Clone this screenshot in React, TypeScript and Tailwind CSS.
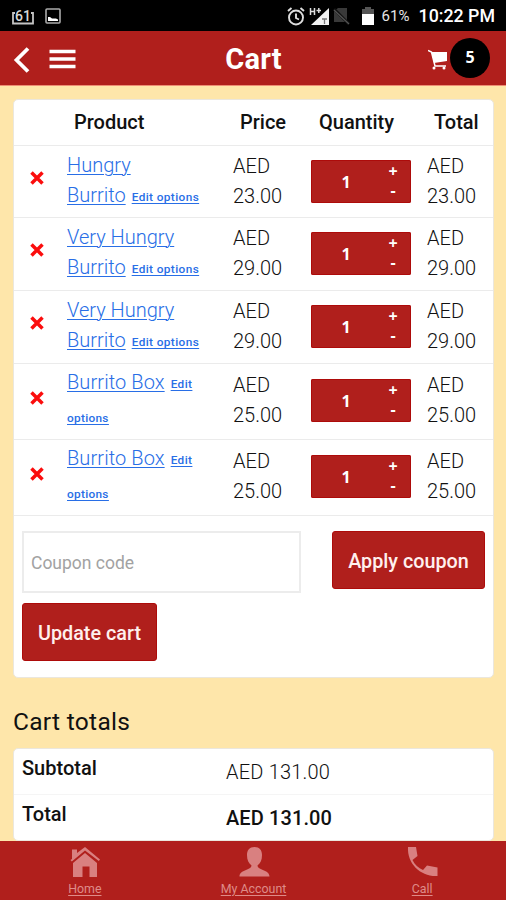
import type { ReactNode } from 'react';

type CartItem = {
  id: number;
  name: string[];
  options: string[];
  price: string;
  quantity: number;
  rowClass: string;
};

const CART_ITEMS: CartItem[] = [
  { id: 1, name: ['Hungry', 'Burrito'], options: ['Edit options'], price: '23.00', quantity: 1, rowClass: 'h-[72px]' },
  { id: 2, name: ['Very Hungry', 'Burrito'], options: ['Edit options'], price: '29.00', quantity: 1, rowClass: 'h-[73px]' },
  { id: 3, name: ['Very Hungry', 'Burrito'], options: ['Edit options'], price: '29.00', quantity: 1, rowClass: 'h-[73px]' },
  { id: 4, name: ['Burrito Box'], options: ['Edit', 'options'], price: '25.00', quantity: 1, rowClass: 'h-[76px]' },
  { id: 5, name: ['Burrito Box'], options: ['Edit', 'options'], price: '25.00', quantity: 1, rowClass: 'h-[76px]' }
];

const COLUMNS = 'grid grid-cols-[53px_166px_78px_116px_66px]';

const StatusBar = () => (
  <div className="flex h-[31px] shrink-0 items-center bg-black pl-3 pr-[10px] pt-px text-[#e6e6e6]">
    <svg viewBox="0 0 22 17" className="h-[17px] w-[22px]" fill="none" stroke="#c4c4c4">
      <path d="M3 5H1v10.500h20V5h-2" strokeWidth="1.8" />
      <text x="3" y="12.500" fill="#d8d8d8" stroke="none" fontFamily="Roboto" fontSize="14" fontWeight="500">
        61
      </text>
    </svg>
    <svg viewBox="0 0 16 16" className="ml-[11px] size-4" fill="none">
      <rect x="1" y="1" width="14" height="14" rx="1" stroke="#aaa" strokeWidth="1.6" />
      <path d="M3 13V9h2l2 1.500h4L13 11.500V13Z" fill="#fff" />
    </svg>
    <div className="ml-auto flex items-center">
      <svg viewBox="0 0 18 19" className="h-[19px] w-[18px]" fill="none" stroke="#dedede" strokeWidth="1.9">
        <circle cx="9" cy="10.500" r="7" />
        <path d="M9 6.500v4.500l3 1.500M1 4l3.500-3M17 4l-3.500-3" />
      </svg>
      <svg viewBox="0 0 21 19" className="ml-[4px] h-[19px] w-[21px]">
        <path d="M20 1v17H2Z" fill="#f2f2f2" />
        <path d="M1.500 1v7M5.500 1v7M1.500 4.500h4M7.500 3.500h4.500M9.800 1v5" stroke="#ddd" strokeWidth="1.5" />
        <path d="M13 12h5M15.500 12v5" stroke="#777" strokeWidth="1.3" />
      </svg>
      <svg viewBox="0 0 17 18" className="ml-[3px] h-[18px] w-[17px]">
        <path d="M1 4 5 1h9v14H1Z" fill="#393939" />
        <path d="m1 2 15 15" stroke="#111" strokeWidth="3" />
        <path d="m1 3 15 14" stroke="#555" strokeWidth="1.2" />
      </svg>
      <svg viewBox="0 0 14 19" className="ml-[11px] h-[19px] w-[14px]">
        <path d="M4 0h6v2h3v6H1V2h3Z" fill="#555" />
        <path d="M1 7h12v11H1Z" fill="#fff" />
      </svg>
      <span className="ml-[7px] w-[37px] whitespace-nowrap text-[15px]">61%</span>
      <span className="mr-px whitespace-nowrap text-[17.800px] font-medium text-white">10:22 PM</span>
    </div>
  </div>
);

const Header = () => (
  <header className="grid h-[54px] shrink-0 grid-cols-[1fr_auto_1fr] items-center bg-[#b01f1c] text-white">
    <div className="flex items-center pl-[13px] pt-1">
      <svg viewBox="0 0 17 26" className="h-[26px] w-[17px]" fill="none" stroke="white" strokeWidth="3.800">
        <path d="M15 1.500 3.500 13 15 24.500" />
      </svg>
      <svg viewBox="0 0 27 20" className="mb-[2px] ml-[19px] h-5 w-[27px]" stroke="white" strokeWidth="3.500">
        <path d="M.5 2.500h26M.5 10h26M.5 17.500h26" />
      </svg>
    </div>
    <h1 className="pl-px pt-1 text-[29px] font-bold tracking-[0.2px]">Cart</h1>
    <div className="flex items-center justify-end pr-4">
      <svg viewBox="0 0 20 21" className="mt-[2px] h-[21px] w-5" fill="none" stroke="white">
        <path d="M0 1.500 3.500 3 7 17h11" strokeWidth="1.500" />
        <path d="M3.500 3H19v9L6 14Z" fill="white" stroke="none" />
        <circle cx="6" cy="19" r="1.500" fill="white" stroke="none" />
        <circle cx="16" cy="19" r="1.500" fill="white" stroke="none" />
      </svg>
      <span className="ml-[2px] flex size-10 items-center justify-center rounded-full bg-black pb-[2px] font-['Open_Sans'] text-[16px] font-bold">
        5
      </span>
    </div>
  </header>
);

const QuantityInput = ({ value }: { value: number }) => (
  <div className="flex h-[43px] w-[100px] rounded-[2px] bg-[#b01f1c] font-['Open_Sans'] font-bold text-white ring-1 ring-inset ring-[#ad0b0a]">
    <span className="flex w-[70px] items-center justify-center text-[16px]">{value}</span>
    <div className="flex w-6 flex-col items-center text-[16px] leading-5">
      <button type="button" className="h-5 pt-px">+</button>
      <button type="button" className="h-5">-</button>
    </div>
  </div>
);

const CartRow = ({ item }: { item: CartItem }) => {
  const isLong = item.name.length > 1;
  return (
    <div className={`${COLUMNS} ${item.rowClass} border-t border-[#ebebeb] text-[20px] font-light leading-[30px]`}>
      <div className="flex items-center justify-center pr-[7px]">
        <svg viewBox="0 0 14 14" className="mt-[-8px] size-[14px]" stroke="#fb0d0d" strokeWidth="3.500">
          <path d="m1.500 1.500 11 11m0-11-11 11" />
        </svg>
      </div>
      <div className={`whitespace-nowrap text-[#286ee6] underline decoration-1 underline-offset-2 ${isLong ? 'pt-1' : 'pt-[3px]'}`}>
        {isLong && <div>{item.name[0]}</div>}
        <div className={isLong ? '' : 'pb-[3px] tracking-[0.1px]'}>
          <a>{item.name[item.name.length - 1]}</a>
          <a className="relative -top-px ml-[6px] inline-block text-[11.800px] font-medium tracking-[0.4px] underline">
            {item.options[0]}
          </a>
        </div>
        {item.options[1] && (
          <a className="block text-[11.800px] font-medium tracking-[0.3px] underline">{item.options[1]}</a>
        )}
      </div>
      <div className={isLong ? 'pt-[5px]' : 'pt-[6px]'}>
        AED<br />{item.price}
      </div>
      <div className={isLong ? 'pt-[14px]' : 'pt-[15px]'}>
        <QuantityInput value={item.quantity} />
      </div>
      <div className={isLong ? 'pt-[5px]' : 'pt-[6px]'}>
        AED<br />{item.price}
      </div>
    </div>
  );
};

const CartCard = () => (
  <section className="h-[579px] w-[481px] rounded-[5px] border border-[#ebe7dd] bg-white">
    <div className={`${COLUMNS} h-[45px] pt-[7px] text-[20px] font-medium leading-[30px]`}>
      <span />
      <span className="pl-[7px]">Product</span>
      <span className="pl-[7px]">Price</span>
      <span className="pl-[8px]">Quantity</span>
      <span className="pl-[7px]">Total</span>
    </div>
    {CART_ITEMS.map((item) => (
      <CartRow key={item.id} item={item} />
    ))}
    <div className="border-t border-[#ebebeb] px-2 pt-[15px]">
      <div className="flex items-start justify-between">
        <input
          type="text"
          placeholder="Coupon code"
          className="h-[62px] w-[279px] border-2 border-[#ececec] px-[7px] pt-px text-[17.500px] placeholder:text-[#a2a2a2]"
        />
        <button type="button" className="h-[58px] w-[153px] rounded-[3px] border border-[#ad0b0a] bg-[#b01f1c] pt-[3px] text-[19.800px] font-medium text-[#fff0ee]">
          Apply coupon
        </button>
      </div>
      <button type="button" className="mt-[10px] h-[58px] w-[135px] rounded-[3px] border border-[#ad0b0a] bg-[#b01f1c] pt-[3px] text-[19.800px] font-medium text-[#fff0ee]">
        Update cart
      </button>
    </div>
  </section>
);

const CartTotals = () => (
  <section className="flex min-h-0 flex-1 flex-col pt-[26px]">
    <h2 className="text-[24.500px] leading-9 tracking-[0.3px]">Cart totals</h2>
    <div className="mt-[8px] w-[481px] flex-1 rounded-[5px] border border-[#ebe7dd] bg-white text-[20px] leading-[30px]">
      <div className="grid h-[46px] grid-cols-[204px_1fr] border-b border-[#f5f5f5] px-2">
        <span className="pt-[4px] font-medium">Subtotal</span>
        <span className="pt-[8px] font-light tracking-[0.2px]">AED 131.00</span>
      </div>
      <div className="grid grid-cols-[204px_1fr] px-2">
        <span className="pt-[4px] font-medium">Total</span>
        <span className="pt-[8px] font-medium tracking-[0.1px]">AED 131.00</span>
      </div>
    </div>
  </section>
);

const NavItem = ({ label, children }: { label: string; children: ReactNode }) => (
  <a className="flex flex-1 flex-col items-center pl-px pt-[5px]">
    <svg viewBox="0 0 32 32" className="size-8" fill="#d98080">
      {children}
    </svg>
    <span className="mt-[2px] whitespace-nowrap text-[12.400px] leading-[18px] text-[#df8b88] underline underline-offset-2">
      {label}
    </span>
  </a>
);

const BottomNav = () => (
  <nav className="flex h-[59px] shrink-0 bg-[#b01f1c]">
    <NavItem label="Home">
      <path d="M4 17 16 7l12 10v14h-7.500V20.500h-7V31H4Z" />
      <path d="M3 13V3.500h5V7l8-6 15 12.500-1.200 1.500L16 4.500 2.800 15.500 1.500 14Z" />
    </NavItem>
    <NavItem label="My Account">
      <path d="M16.500 1c5 0 7.500 3 7.500 8 0 5-1.500 8-4.500 10.500 0 5 12 4 12 11H1.500c0-7 12-6 12-11C10.500 17 9 14 9 9c0-5 2.500-8 7.500-8Z" />
    </NavItem>
    <NavItem label="Call">
      <path d="M2 1h8l1.500 9-5 4c2 4.500 6 8 10.500 10l4-4.500 10.500 2V30C15 31 1 18 2 1Z" />
    </NavItem>
  </nav>
);

export default function App() {
  return (
    <div className="flex h-[900px] w-[506px] flex-col overflow-hidden bg-[#fee6aa] font-['Roboto',sans-serif] text-[#111]">
      <StatusBar />
      <Header />
      <main className="flex min-h-0 flex-1 flex-col border-t border-[#ee8d75] pl-[13px] pt-[13px]">
        <CartCard />
        <CartTotals />
      </main>
      <BottomNav />
    </div>
  );
}
